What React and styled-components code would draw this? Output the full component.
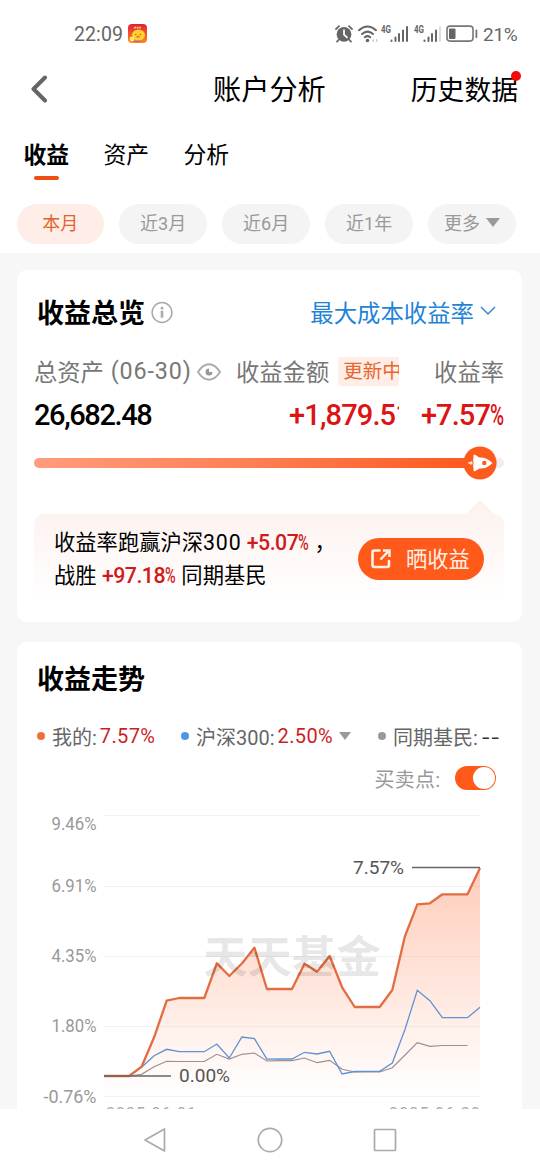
import React from 'react'
import styled, { createGlobalStyle } from 'styled-components'

const GlobalStyle = createGlobalStyle`
  * { box-sizing: border-box; }
  body {
    margin: 0;
    background: #fff;
    font-family: Roboto, "Noto Sans CJK SC", sans-serif;
    color: #000;
  }
  svg { display: block; flex: none; }
`

/* chart data, one entry per day, in chart pixels from the top */
const mine = [276, 276, 276, 266.7, 237.3, 200.7, 198, 198, 198, 163.3, 176, 163.5, 147.7, 189, 189, 189, 163.7, 171.7, 156, 187.3, 207, 207, 207, 190, 136.7, 104.3, 103.3, 94.3, 94.3, 94.3, 68]
const index300 = [276, 276, 276, 267.3, 255.7, 249.3, 251.7, 251.7, 251.7, 244, 258, 237, 238.7, 259.2, 259, 259, 252.3, 254, 251.3, 274, 271.5, 271.3, 271.3, 263, 230, 190.3, 200.7, 217.7, 217.7, 217.7, 207.3]
const peers = [276, 276, 276, 274.3, 266.7, 261.3, 261.5, 261.5, 261.5, 254.3, 259, 254.3, 253, 261, 260.7, 260.7, 258, 262.7, 260.3, 269.3, 272, 272, 272, 267.7, 255.3, 242.7, 246.3, 245.5, 245.5, 245.5]

const toPoints = (list) => list.map((y, i) => `${(87 + i * 12.533).toFixed(1)},${y}`).join(' ')

const grid = [
  { y: 15.5, label: '9.46%', ty: 30, w: 45 },
  { y: 86.5, label: '6.91%', ty: 92, w: 45 },
  { y: 156.5, label: '4.35%', ty: 162, w: 45 },
  { y: 226.5, label: '1.80%', ty: 232.3, w: 45 },
  { y: 296.5, label: '-0.76%', ty: 302.5, w: 53 },
]

function Signal({ weak }) {
  return (
    <svg width="29" height="20" viewBox="0 0 29 20">
      <text x="0" y="9" fontSize="10" fontWeight="700" fill="#666" textLength="10" lengthAdjust="spacingAndGlyphs">4G</text>
      <g stroke="#666" strokeWidth="2" strokeLinecap="round">
        <path d="M10.5 16.5v.5M14.5 13.5v3.5M18 10v7M22 6.5v10.5" />
        <path d="M26 3v14" stroke={weak ? '#ddd' : '#666'} />
      </g>
    </svg>
  )
}

function StatusBar() {
  return (
    <Status>
      <Clock>22:09</Clock>
      <AppIcon width="19" height="19" viewBox="0 0 19 19">
        <defs>
          <linearGradient id="app" x1="0" y1="0" x2="0" y2="1">
            <stop offset="0" stopColor="#e2203a" />
            <stop offset="1" stopColor="#fb8c1c" />
          </linearGradient>
        </defs>
        <rect width="19" height="19" rx="4" fill="url(#app)" />
        <path d="M6 3.6h7" stroke="#ffb9a0" strokeWidth="1.6" strokeDasharray="2 .6" />
        <ellipse cx="10.5" cy="11" rx="6.5" ry="5.6" fill="#ffd02e" />
        <circle cx="4" cy="15" r="2.4" fill="#ffe27a" />
        <path d="M5 18q5-3 10 0z" fill="#b565a8" />
        <ellipse cx="10" cy="12.8" rx="1.8" ry="1.1" fill="#f2772a" />
        <circle cx="7.8" cy="10.5" r=".6" fill="#6b3510" />
        <circle cx="12.4" cy="10.5" r=".6" fill="#6b3510" />
      </AppIcon>
      <StatusIcons>
        <svg width="18" height="18" viewBox="0 0 18 18">
          <circle cx="9" cy="9.3" r="7.4" fill="#666" />
          <path d="M1 4.2L4 1.2M17 4.2L14 1.2M3.5 15L2 16.6M14.5 15L16 16.6" stroke="#666" strokeWidth="1.8" strokeLinecap="round" />
          <path d="M9 5v4.6l3 2.8" stroke="#fff" strokeWidth="1.7" fill="none" strokeLinecap="round" />
        </svg>
        <WifiIcon width="20" height="18" viewBox="0 0 20 18">
          <g fill="none" stroke="#666" strokeWidth="2" strokeLinecap="round">
            <path d="M1 5.2Q9.5-2.2 18 5.2" />
            <path d="M4 9Q9.5 4.2 15 9" />
            <path d="M6.8 12.3Q9.5 10 12.2 12.3" />
          </g>
          <circle cx="9.5" cy="15.5" r="1.8" fill="#666" />
          <path d="M14 15.5l2-2v4zM20 15.5l-2-2v4z" fill="#ccc" />
        </WifiIcon>
        <Signal />
        <Signal weak />
        <svg width="32" height="18" viewBox="0 0 32 18">
          <rect x="1" y="1.1" width="26" height="15" rx="3" fill="none" stroke="#777" strokeWidth="1.6" />
          <rect x="3" y="3.5" width="6.5" height="10.4" rx="1" fill="#666" />
          <path d="M30.4 5.3v7" stroke="#777" strokeWidth="1.8" strokeLinecap="round" />
        </svg>
      </StatusIcons>
      <Battery>21%</Battery>
    </Status>
  )
}

function TrendChart() {
  return (
    <svg width="505" height="330" viewBox="0 0 505 330">
      <defs>
        <linearGradient id="area" gradientUnits="userSpaceOnUse" x1="0" y1="68" x2="0" y2="296">
          <stop offset="0" stopColor="#ff5a1f" stopOpacity=".31" />
          <stop offset=".6" stopColor="#ff5a1f" stopOpacity=".125" />
          <stop offset="1" stopColor="#ff5a1f" stopOpacity="0" />
        </linearGradient>
      </defs>
      {grid.map((g) => (
        <g key={g.label}>
          <path d={`M87 ${g.y}H463`} stroke="#f3f3f3" />
          <text x={79.5 - g.w} y={g.ty} fontSize="18" fill="#999" textLength={g.w} lengthAdjust="spacingAndGlyphs">{g.label}</text>
        </g>
      ))}
      <polygon points={`87,296 ${toPoints(mine)} 463,296`} fill="url(#area)" />
      <polyline points={toPoints(peers)} fill="none" stroke="#999090" strokeWidth="1.2" />
      <polyline points={toPoints(index300)} fill="none" stroke="#5f92d4" strokeWidth="1.3" />
      <polyline points={toPoints(mine)} fill="none" stroke="#e36d41" strokeWidth="2.3" strokeLinejoin="round" />
      <text x="186" y="173" fontSize="44" fontWeight="700" fill="#000" fillOpacity=".1" textLength="178" lengthAdjust="spacingAndGlyphs">天天基金</text>
      <path d="M87 276H154" stroke="#666" strokeWidth="1.6" />
      <path d="M395 67.5H463" stroke="#666" strokeWidth="1.6" />
      <text x="162" y="282" fontSize="19" fill="#555" textLength="51" lengthAdjust="spacingAndGlyphs">0.00%</text>
      <text x="336" y="74" fontSize="19" fill="#555" textLength="51" lengthAdjust="spacingAndGlyphs">7.57%</text>
      <text x="89" y="318.5" fontSize="16" fill="#aaa" textLength="90">2025-06-01</text>
      <text x="372" y="318.5" fontSize="16" fill="#aaa" textLength="91">2025-06-30</text>
    </svg>
  )
}

function App() {
  return (
    <Page>
      <GlobalStyle />
      <StatusBar />
      <Header>
        <svg width="20" height="32" viewBox="0 0 20 32">
          <path d="M16 2.5L4.5 14l11.5 11.5" fill="none" stroke="#666" strokeWidth="4" strokeLinecap="round" strokeLinejoin="round" />
        </svg>
        <HeaderTitle>账户分析</HeaderTitle>
        <History>历史数据<RedDot /></History>
      </Header>
      <Tabs>
        <TabItem $active>收益</TabItem>
        <TabItem>资产</TabItem>
        <TabItem>分析</TabItem>
      </Tabs>
      <Chips>
        <Chip $active>本月</Chip>
        <Chip>近3月</Chip>
        <Chip>近6月</Chip>
        <Chip>近1年</Chip>
        <Chip>更多<Caret $size={7} /></Chip>
      </Chips>

      <Body>
        {/* overview */}
        <Card $height={352}>
          <CardHead>
            <CardTitle>收益总览</CardTitle>
            <svg width="22" height="24" viewBox="0 0 22 24">
              <circle cx="11" cy="11.5" r="9.9" fill="none" stroke="#aaa" strokeWidth="1.5" />
              <circle cx="11" cy="7.2" r="1.4" fill="#aaa" />
              <path d="M11 9.7v7" fill="none" stroke="#aaa" strokeWidth="2.6" />
            </svg>
            <RateLink>
              最大成本收益率
              <svg width="16" height="10" viewBox="0 0 16 10">
                <path d="M1 1l7 7 7-7" fill="none" stroke="#3c86d4" strokeWidth="1.5" />
              </svg>
            </RateLink>
          </CardHead>
          <Stats>
            <Stat>
              <StatLabel>
                总资产&nbsp;<Digits>(06-30)</Digits>
                <svg width="24" height="18" viewBox="0 0 24 18">
                  <path d="M1 9Q6 1.3 12 1.3T23 9Q18 16.7 12 16.7T1 9z" fill="none" stroke="#aaa" strokeWidth="1.9" />
                  <path d="M12 5.5A3.5 3.5 0 1 0 15.5 9h-3.5z" fill="#999" />
                </svg>
              </StatLabel>
              <StatValue $spacing="-1.4px">26,682.48</StatValue>
            </Stat>
            <Stat>
              <StatLabel>收益金额<Updating>更新中</Updating></StatLabel>
              <StatValue $up $indent={53} $spacing="-0.85px">+1,879.51</StatValue>
            </Stat>
            <Stat $end>
              <StatLabel>收益率</StatLabel>
              <StatValue $up $spacing="-0.9px">+7.57<Percent>%</Percent></StatValue>
            </Stat>
          </Stats>
          <Progress>
            <ProgressFill />
            <Rocket width="34" height="34" viewBox="0 0 34 34">
              <circle cx="17" cy="17" r="16.6" fill="#fd5a1e" />
              <path d="M10 13Q21.5 8.5 29.5 17Q21.5 25.5 10 21Q11.2 17 10 13z" fill="#fff" />
              <path d="M10.5 13.5V9.2l1-.6 6 3.6zM10.5 20.5v4.3l1 .6 6-3.6z" fill="#fff" />
              <circle cx="21.3" cy="17" r="2.2" fill="#fd5a1e" />
              <path d="M4.5 17l3-1.6h2v3.2h-2z" fill="#ffe3d6" />
            </Rocket>
            <ProgressRest />
          </Progress>
          <Tip>
            <TipArrow />
            <TipText>
              <p>收益率跑赢沪深<u>300</u> <b>+5.07<i>%</i></b> ，</p>
              <p>战胜 <b>+97.18<i>%</i></b> 同期基民</p>
            </TipText>
            <ShareButton>
              <svg width="20" height="20" viewBox="0 0 20 20">
                <path d="M8.5 1.5H3.5Q1.5 1.5 1.5 3.5v12.5q0 2 2 2h12.5q2 0 2-2V12" fill="none" stroke="#fff0e6" strokeWidth="2.6" strokeLinecap="round" />
                <path d="M9.5 10.5L17.5 2.2M12 1.5h6.5V8" fill="none" stroke="#fff0e6" strokeWidth="2.5" />
              </svg>
              <span>晒收益</span>
            </ShareButton>
          </Tip>
        </Card>

        {/* trend */}
        <Card $height={500}>
          <CardHead $trend>
            <CardTitle>收益走势</CardTitle>
          </CardHead>
          <Legend>
            <LegendItem $width={144} $color="#ee6f3c">我的: <em>7.57%</em></LegendItem>
            <LegendItem $width={197} $color="#4b97ee">沪深300: <em>2.50%</em><Caret $size={6} /></LegendItem>
            <LegendItem $color="#999">同期基民: <Dashes>--</Dashes></LegendItem>
          </Legend>
          <SwitchRow>
            买卖点:
            <Switch><Knob /></Switch>
          </SwitchRow>
          <TrendChart />
        </Card>
      </Body>

      <NavBar>
        <svg width="24" height="26" viewBox="0 0 24 26">
          <path d="M21.5 2v22L2 13z" fill="none" stroke="#aaa" strokeWidth="1.7" strokeLinejoin="round" />
        </svg>
        <svg width="26" height="26" viewBox="0 0 26 26">
          <circle cx="13" cy="13" r="11.7" fill="none" stroke="#aaa" strokeWidth="1.7" />
        </svg>
        <svg width="24" height="24" viewBox="0 0 24 24">
          <rect x="1.5" y="1.5" width="21" height="21" rx="1" fill="none" stroke="#aaa" strokeWidth="1.7" />
        </svg>
      </NavBar>
    </Page>
  )
}

export default App

const Page = styled.div`
  width: 540px;
  height: 1170px;
  display: flex;
  flex-direction: column;
  overflow: hidden;
  white-space: nowrap;
`
const Status = styled.div`
  height: 59px;
  padding: 9px 22px 0 74px;
  display: flex;
  align-items: center;
  color: #666;
`
const Clock = styled.span`
  width: 54px;
  font-size: 19.5px;
  letter-spacing: 0.1px;
`
const AppIcon = styled.svg`
  margin-top: -2px;
`
const StatusIcons = styled.div`
  flex: 1;
  display: flex;
  align-items: center;
  justify-content: flex-end;
  gap: 3.5px;
`
const WifiIcon = styled.svg`
  margin-left: 1px;
`
const Battery = styled.span`
  width: 35px;
  margin-left: 5px;
  font-size: 19px;
  letter-spacing: -0.3px;
`
const Header = styled.header`
  height: 60px;
  padding: 3px 22px 0 29px;
  display: flex;
  align-items: center;
`
const HeaderTitle = styled.h1`
  margin: 0 0 0 164px;
  width: 198px;
  font-size: 28.2px;
  font-weight: 400;
  line-height: 40px;
`
const History = styled.span`
  position: relative;
  font-size: 26.8px;
  line-height: 40px;
`
const RedDot = styled.i`
  position: absolute;
  right: -3px;
  top: 0;
  width: 10px;
  height: 10px;
  border-radius: 50%;
  background: #f80a0a;
`
const Tabs = styled.nav`
  height: 85px;
  padding: 18px 0 0 23.5px;
  display: flex;
  gap: 34px;
`
const TabItem = styled.div`
  width: 46px;
  font-size: 22.8px;
  line-height: 37px;
  font-weight: ${(p) => (p.$active ? 700 : 400)};
  &::after {
    content: '';
    display: ${(p) => (p.$active ? 'block' : 'none')};
    width: 25px;
    height: 4px;
    margin: 2px auto 0;
    border-radius: 2px;
    background: #ee4d13;
  }
`
const Chips = styled.div`
  height: 49px;
  padding-left: 16.5px;
  display: flex;
  align-items: flex-start;
  gap: 15.7px;
`
const Chip = styled.button`
  width: 87.3px;
  height: 39.5px;
  padding: 0 0 3px;
  border: 0;
  border-radius: 20px;
  display: flex;
  align-items: center;
  justify-content: center;
  font: inherit;
  font-size: 18px;
  color: ${(p) => (p.$active ? '#e2632f' : '#999')};
  background: ${(p) => (p.$active ? '#ffede7' : '#f4f4f4')};
`
const Caret = styled.i`
  margin-left: 6px;
  border: ${(p) => p.$size}px solid transparent;
  border-top: ${(p) => p.$size + 2}px solid #999;
  border-bottom: 0;
`
const Body = styled.main`
  flex: 1;
  min-height: 0;
  padding: 17px 18px 0 17px;
  display: flex;
  flex-direction: column;
  gap: 20px;
  overflow: hidden;
  background: #f7f7f7;
`
const Card = styled.section`
  flex: none;
  height: ${(p) => p.$height}px;
  border-radius: 10px;
  background: #fff;
`
const CardHead = styled.div`
  height: ${(p) => (p.$trend ? 74 : 86)}px;
  padding: 0 26px 0 20px;
  display: flex;
  align-items: center;
`
const CardTitle = styled.h2`
  margin: 2px 6px 0 0;
  font-size: 27px;
  font-weight: 700;
  line-height: 40px;
`
const RateLink = styled.a`
  margin: -2px 0 0 auto;
  display: flex;
  align-items: center;
  gap: 6px;
  font-size: 23.4px;
  color: #1f84d6;
  svg { margin-top: -3px; }
`
const Stats = styled.div`
  height: 98px;
  padding: 0 18px 0 17px;
  display: grid;
  grid-template-columns: 202px 163px 1fr;
`
const Stat = styled.div`
  overflow: hidden;
  display: flex;
  flex-direction: column;
  align-items: ${(p) => (p.$end ? 'flex-end' : 'flex-start')};
`
const StatLabel = styled.div`
  height: 30px;
  display: flex;
  align-items: center;
  font-size: 23.3px;
  color: #777;
  svg { margin: 2px 0 0 5px; }
`
const Digits = styled.span`
  margin-left: 1px;
  letter-spacing: 0.9px;
`
const StatValue = styled.div`
  margin: 9px 0 0 ${(p) => p.$indent || 0}px;
  font-size: 29px;
  line-height: 40px;
  font-weight: 500;
  letter-spacing: ${(p) => p.$spacing};
  color: ${(p) => (p.$up ? '#dc1414' : '#000')};
`
const Percent = styled.span`
  display: inline-block;
  width: 14px;
  transform: scaleX(0.66);
  transform-origin: left;
`
const Updating = styled.span`
  margin-left: 9px;
  padding: 1px 5px 0;
  border-radius: 4px;
  font-size: 19.5px;
  line-height: 28px;
  color: #e5682f;
  background: #ffede7;
`
const Progress = styled.div`
  height: 17px;
  padding: 0 18px 0 17px;
  display: flex;
  align-items: center;
`
const ProgressFill = styled.div`
  flex: 1;
  height: 10px;
  margin-right: -3px;
  border-radius: 5px 0 0 5px;
  background: linear-gradient(90deg, #ff9c7c, #ff7f54 50%, #ff5a20);
`
const Rocket = styled.svg`
  position: relative;
`
const ProgressRest = styled.div`
  width: 10px;
  height: 10px;
  margin-left: -3px;
  border-radius: 0 5px 5px 0;
  background: #eee;
`
const Tip = styled.div`
  position: relative;
  height: 87px;
  margin: 43px 18px 0 17px;
  padding: 0 20px 0 20px;
  display: flex;
  justify-content: space-between;
  align-items: center;
  border-radius: 10px;
  background: linear-gradient(#fdf3f0, #fff);
`
const TipArrow = styled.i`
  position: absolute;
  right: 10px;
  top: -14px;
  border: 14px solid transparent;
  border-top: 0;
  border-bottom-color: #fdf3f0;
`
const TipText = styled.div`
  margin-top: 3px;
  font-size: 21.3px;
  line-height: 33px;
  p { margin: 0; }
  u {
    text-decoration: none;
    letter-spacing: 0.8px;
  }
  b {
    font-weight: 500;
    letter-spacing: -0.5px;
    color: #d01a1a;
  }
  i {
    display: inline-block;
    width: 11px;
    font-style: normal;
    transform: scaleX(0.68);
    transform-origin: left;
  }
`
const ShareButton = styled.button`
  width: 126px;
  height: 42px;
  margin-top: 2px;
  padding: 0 0 0 13px;
  border: 0;
  border-radius: 21px;
  display: flex;
  align-items: center;
  gap: 15px;
  font: inherit;
  font-size: 21.3px;
  color: #fff0e6;
  background: #ff5a1a;
  span { margin-top: -2px; }
`
const Legend = styled.div`
  height: 40px;
  padding-left: 20px;
  display: flex;
  align-items: center;
`
const LegendItem = styled.div`
  width: ${(p) => (p.$width ? p.$width + 'px' : 'auto')};
  display: flex;
  align-items: center;
  font-size: 20px;
  color: #666;
  &::before {
    content: '';
    width: 8px;
    height: 8px;
    margin-right: 7px;
    border-radius: 50%;
    background: ${(p) => p.$color};
  }
  em {
    margin-left: 3px;
    font-style: normal;
    letter-spacing: 0.35px;
    color: #cc1f1f;
  }
`
const Dashes = styled.span`
  margin: 1px 0 0 4px;
  letter-spacing: 1.5px;
  color: #333;
  transform: scaleX(1.35);
  transform-origin: left;
`
const SwitchRow = styled.div`
  height: 44px;
  padding-right: 26.5px;
  display: flex;
  align-items: center;
  justify-content: flex-end;
  gap: 14px;
  font-size: 20px;
  letter-spacing: 0.3px;
  color: #999;
`
const Switch = styled.span`
  width: 41px;
  height: 24px;
  padding: 1px;
  border-radius: 12px;
  display: flex;
  justify-content: flex-end;
  background: #ff5a1a;
`
const Knob = styled.span`
  width: 22px;
  height: 22px;
  border-radius: 50%;
  background: #fff;
`
const NavBar = styled.footer`
  height: 61px;
  display: flex;
  align-items: center;
  justify-content: center;
  gap: 90px;
  background: #fff;
`
